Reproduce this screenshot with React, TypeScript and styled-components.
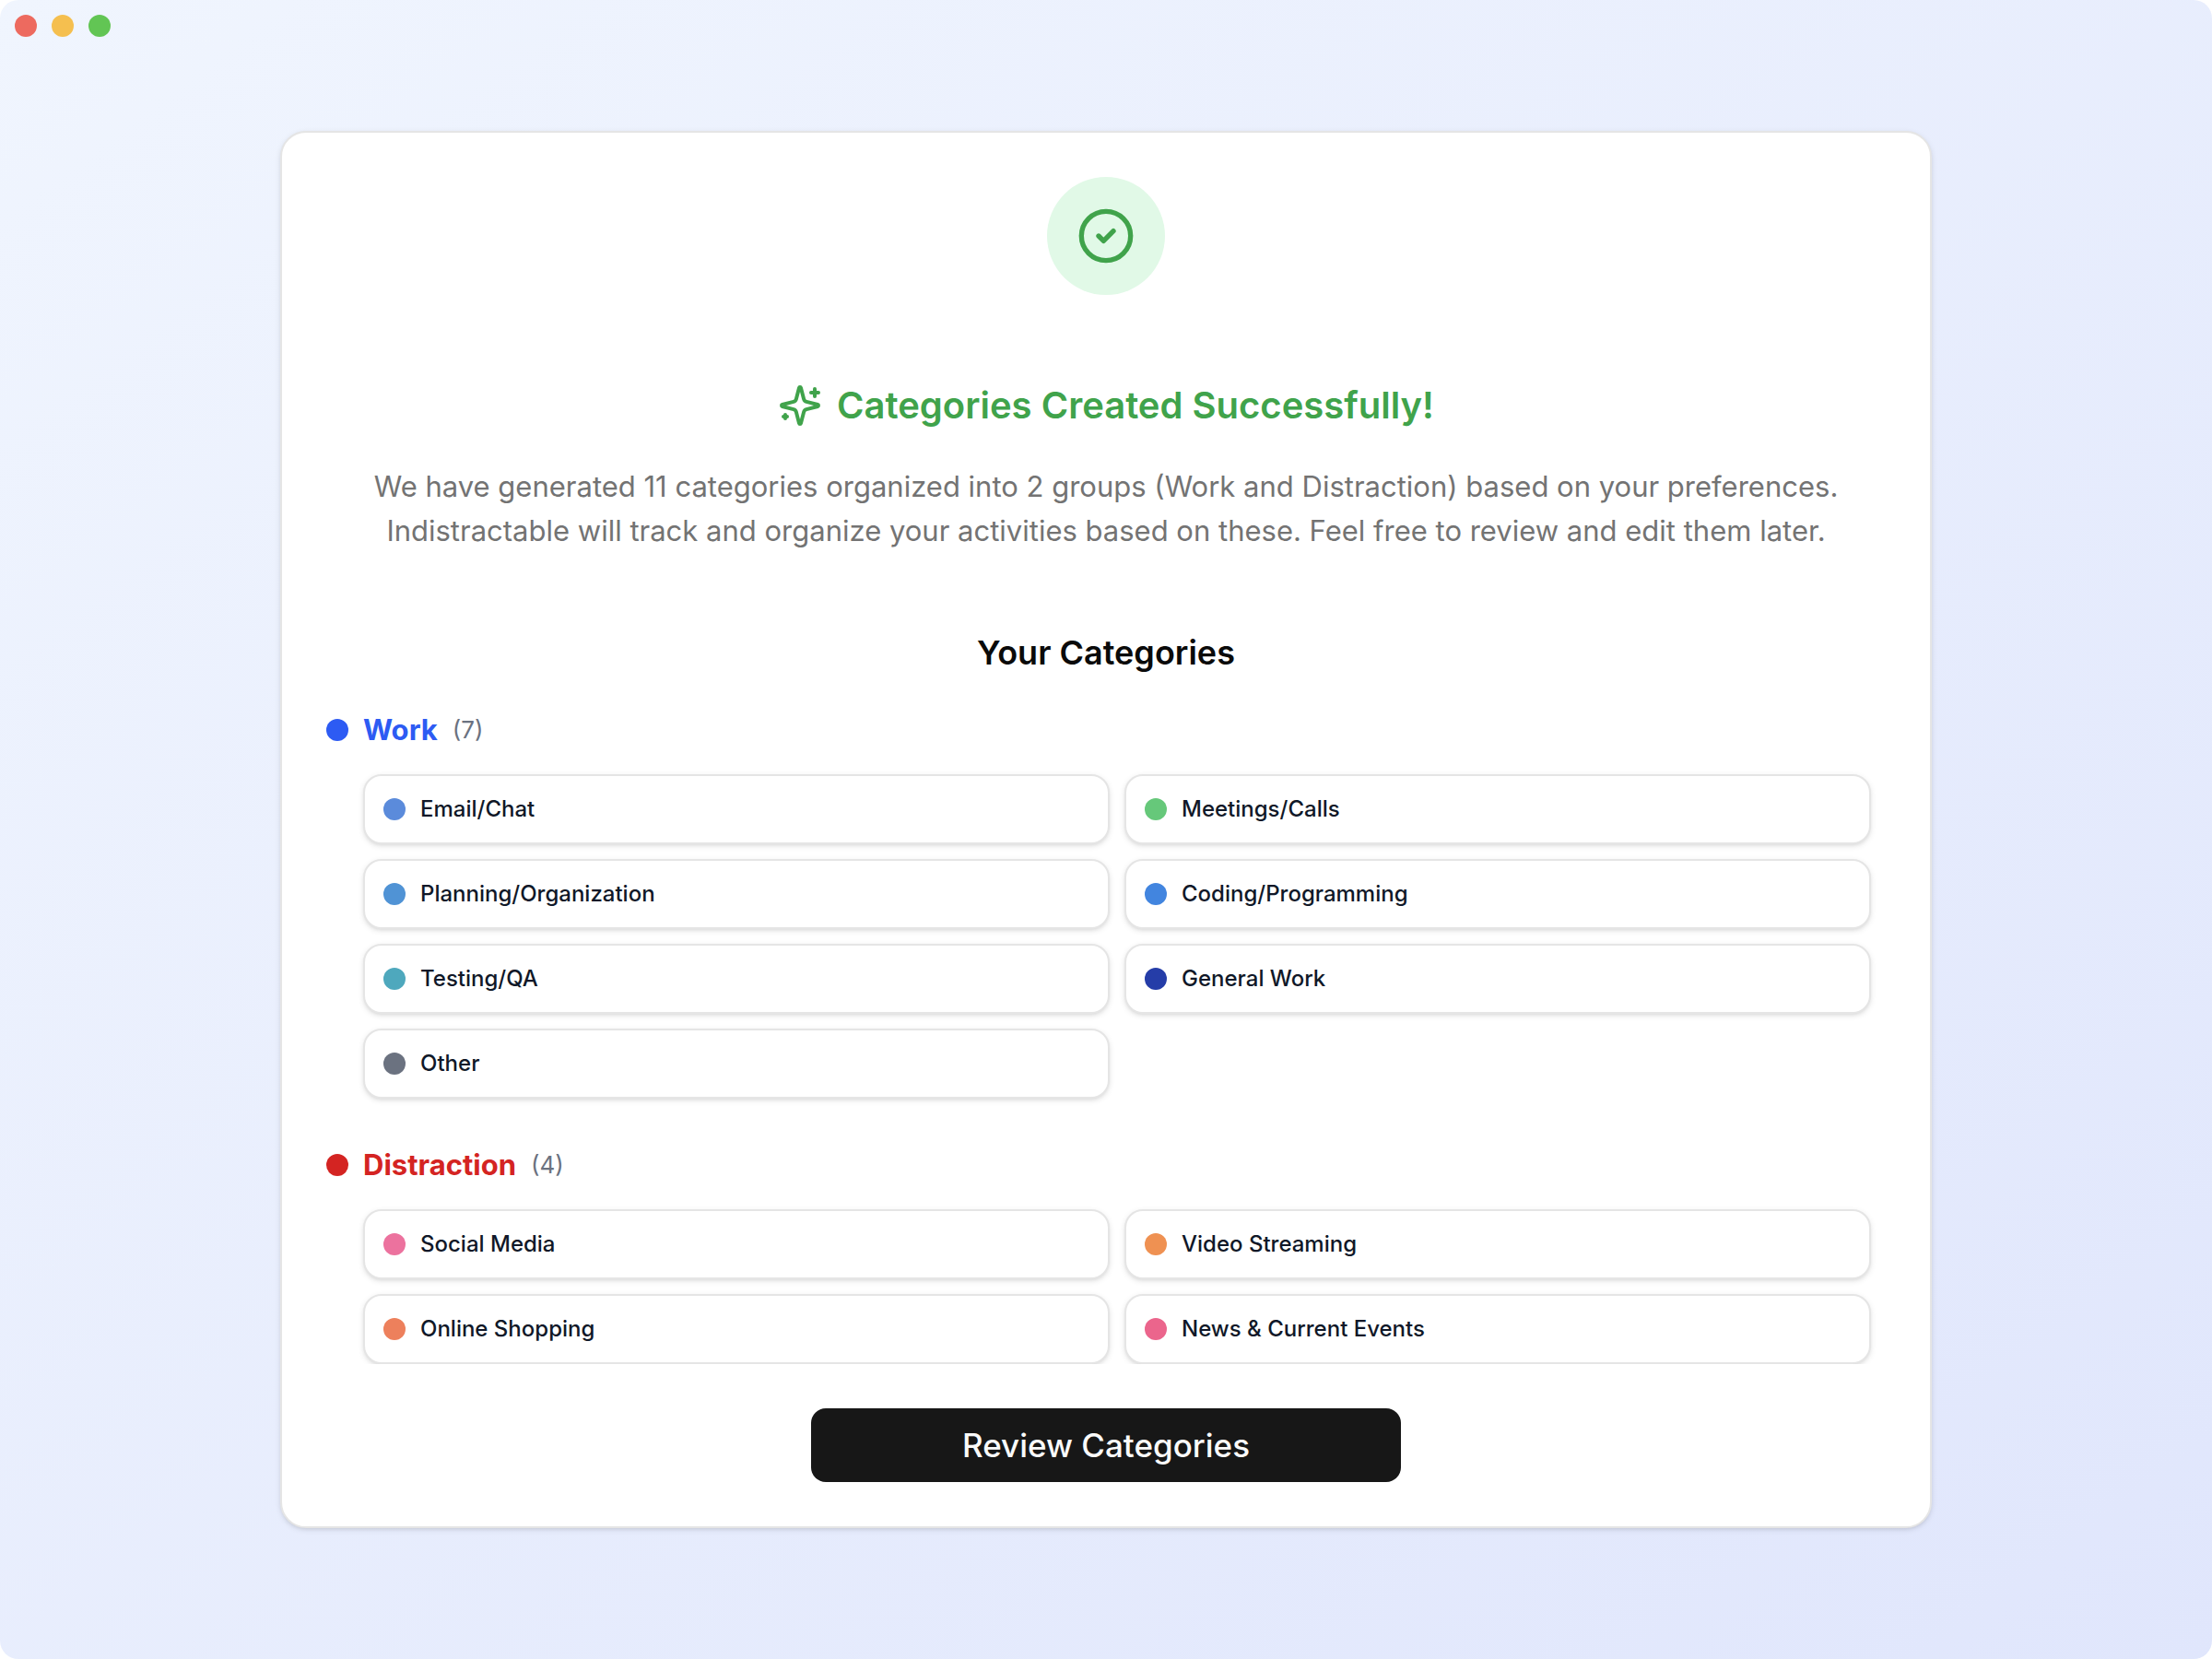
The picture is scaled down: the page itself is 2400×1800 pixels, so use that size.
import React from "react";
import styled, { createGlobalStyle } from "styled-components";
import { CircleCheck } from "lucide-react";

const GlobalStyle = createGlobalStyle`
  *, *::before, *::after {
    box-sizing: border-box;
  }
  body {
    margin: 0;
    background: #ffffff;
    color: #0a0a0a;
    font-family: Inter, "Liberation Sans", sans-serif;
  }
  h1, h2, h3, p, ul {
    margin: 0;
    padding: 0;
  }
`;

const Window = styled.div`
  display: flex;
  flex-direction: column;
  min-height: 100vh;
  border-radius: 20px;
  background: linear-gradient(to bottom right, #f0f5fe, #e0e6fc);
`;

const TitleBar = styled.header`
  display: flex;
  gap: 16px;
  height: 56px;
  padding: 16px;
`;

const WindowButton = styled.button<{ $color: string }>`
  width: 24px;
  height: 24px;
  padding: 0;
  border: 0;
  border-radius: 50%;
  background: ${({ $color }) => $color};
`;

const Main = styled.main`
  display: flex;
  flex: 1;
  align-items: center;
  justify-content: center;
  padding: 0 48px 56px;
`;

const Card = styled.section`
  display: flex;
  flex-direction: column;
  align-items: center;
  width: 100%;
  max-width: 1792px;
  padding: 48px;
  border: 2px solid #e5e5e5;
  border-radius: 28px;
  background: #ffffff;
  box-shadow: 0 2px 6px rgba(0, 0, 0, 0.1), 0 2px 4px -2px rgba(0, 0, 0, 0.1);
`;

const StatusBadge = styled.div`
  display: grid;
  place-items: center;
  width: 128px;
  height: 128px;
  border-radius: 50%;
  background: #e1f9e7;
  color: #40a34b;
`;

const Title = styled.h1`
  display: flex;
  align-items: center;
  gap: 16px;
  margin-top: 96px;
  color: #40a34b;
  font-size: 40px;
  font-weight: 600;
  line-height: 48px;
`;

const Description = styled.p`
  margin-top: 40px;
  color: #737373;
  font-size: 31px;
  line-height: 48px;
  text-align: center;
`;

const SectionTitle = styled.h2`
  margin: 80px 0 32px;
  font-size: 36px;
  font-weight: 600;
  line-height: 56px;
`;

const GroupList = styled.div`
  display: flex;
  flex-direction: column;
  gap: 48px;
  width: 100%;
  padding-right: 16px;
  overflow: hidden;
`;

const GroupHeader = styled.div`
  display: flex;
  align-items: center;
  gap: 16px;
  margin-bottom: 24px;
`;

const Dot = styled.span<{ $color: string }>`
  flex: none;
  width: 24px;
  height: 24px;
  border-radius: 50%;
  background: ${({ $color }) => $color};
`;

const GroupName = styled.h3<{ $color: string }>`
  color: ${({ $color }) => $color};
  font-size: 31px;
  font-weight: 700;
  line-height: 48px;
`;

const GroupCount = styled.span`
  color: #6b7280;
  font-size: 26px;
  line-height: 48px;
`;

const CategoryGrid = styled.ul`
  display: grid;
  grid-template-columns: repeat(2, 1fr);
  gap: 16px;
  margin-left: 40px;
  list-style: none;
`;

const Category = styled.li`
  display: flex;
  align-items: center;
  gap: 16px;
  padding: 20px;
  border: 2px solid #e5e5e5;
  border-radius: 20px;
  background: #ffffff;
  box-shadow: 0 2px 6px rgba(0, 0, 0, 0.1), 0 2px 4px -2px rgba(0, 0, 0, 0.1);
  color: #101828;
  font-size: 24px;
  font-weight: 500;
  line-height: 32px;
`;

const ReviewButton = styled.button`
  width: 100%;
  max-width: 640px;
  height: 80px;
  margin-top: 48px;
  border: 0;
  border-radius: 16px;
  background: #171717;
  color: #fafafa;
  font-family: inherit;
  font-size: 35px;
  font-weight: 500;
  line-height: 56px;
`;

const windowButtons = [
  { label: "Close", color: "#ed6a5f" },
  { label: "Minimize", color: "#f5bf4f" },
  { label: "Zoom", color: "#62c554" },
];

const groups = [
  {
    name: "Work",
    color: "#2d5bf3",
    categories: [
      { name: "Email/Chat", color: "#5b8bdb" },
      { name: "Meetings/Calls", color: "#66c87a" },
      { name: "Planning/Organization", color: "#5093d5" },
      { name: "Coding/Programming", color: "#4285df" },
      { name: "Testing/QA", color: "#4ea8bd" },
      { name: "General Work", color: "#253da8" },
      { name: "Other", color: "#6b7280" },
    ],
  },
  {
    name: "Distraction",
    color: "#d42422",
    categories: [
      { name: "Social Media", color: "#ec729e" },
      { name: "Video Streaming", color: "#ef9152" },
      { name: "Online Shopping", color: "#ed805c" },
      { name: "News & Current Events", color: "#eb658c" },
    ],
  },
];

function SparklesIcon() {
  return (
    <svg
      width="48"
      height="48"
      viewBox="0 0 24 24"
      fill="none"
      stroke="currentColor"
      strokeWidth="2"
      strokeLinecap="round"
      strokeLinejoin="round"
      aria-hidden="true"
    >
      <path d="M9.937 15.5A2 2 0 0 0 8.5 14.063l-6.135-1.582a.5.5 0 0 1 0-.962L8.5 9.936A2 2 0 0 0 9.937 8.5l1.582-6.135a.5.5 0 0 1 .963 0L14.063 8.5A2 2 0 0 0 15.5 9.937l6.135 1.581a.5.5 0 0 1 0 .964L15.5 14.063a2 2 0 0 0-1.437 1.437l-1.582 6.135a.5.5 0 0 1-.963 0z" />
      <path d="M20 3v4" />
      <path d="M22 5h-4" />
      <path d="M4 17v2" />
      <path d="M5 18H3" />
    </svg>
  );
}

export default function App() {
  const total = groups.reduce((sum, group) => sum + group.categories.length, 0);
  const groupNames = groups.map((group) => group.name).join(" and ");

  return (
    <>
      <GlobalStyle />
      <Window>
        <TitleBar>
          {windowButtons.map((button) => (
            <WindowButton
              key={button.label}
              type="button"
              aria-label={button.label}
              $color={button.color}
            />
          ))}
        </TitleBar>
        <Main>
          <Card>
            <StatusBadge>
              <CircleCheck size={64} aria-hidden="true" />
            </StatusBadge>
            <Title>
              <SparklesIcon />
              Categories Created Successfully!
            </Title>
            <Description>
              {`We have generated ${total} categories organized into ${groups.length} groups (${groupNames}) based on your preferences.`}
              <br />
              Indistractable will track and organize your activities based on
              these. Feel free to review and edit them later.
            </Description>
            <SectionTitle>Your Categories</SectionTitle>
            <GroupList>
              {groups.map((group) => (
                <section key={group.name}>
                  <GroupHeader>
                    <Dot $color={group.color} />
                    <GroupName $color={group.color}>{group.name}</GroupName>
                    <GroupCount>{`(${group.categories.length})`}</GroupCount>
                  </GroupHeader>
                  <CategoryGrid>
                    {group.categories.map((category) => (
                      <Category key={category.name}>
                        <Dot $color={category.color} />
                        {category.name}
                      </Category>
                    ))}
                  </CategoryGrid>
                </section>
              ))}
            </GroupList>
            <ReviewButton type="button">Review Categories</ReviewButton>
          </Card>
        </Main>
      </Window>
    </>
  );
}
